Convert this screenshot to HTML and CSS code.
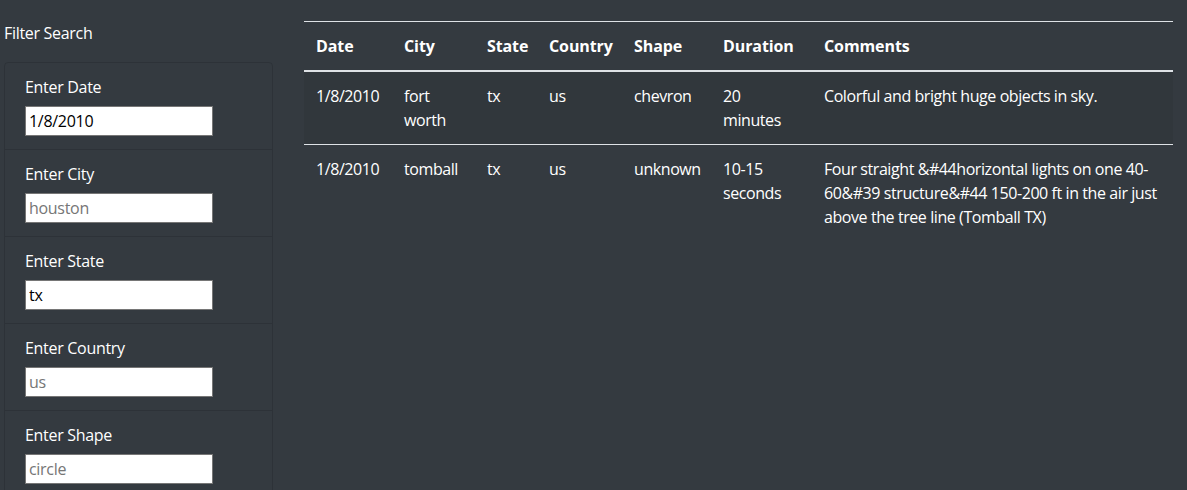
FILE: index.html
```html
<!DOCTYPE html>
<html lang="en">
<head>
<meta charset="utf-8">
<title>UFO Sightings</title>
<link rel="stylesheet" href="styles.css">
</head>
<body>
<div class="page">
  <aside class="sidebar">
    <div class="sidebar-title">Filter Search</div>
    <ul class="filters">
      <li class="filter">
        <label class="filter-label" for="date">Enter Date</label>
        <input class="filter-input" id="date" type="text" value="1/8/2010" placeholder="1/8/2010">
      </li>
      <li class="filter">
        <label class="filter-label" for="city">Enter City</label>
        <input class="filter-input" id="city" type="text" placeholder="houston">
      </li>
      <li class="filter">
        <label class="filter-label" for="state">Enter State</label>
        <input class="filter-input" id="state" type="text" value="tx" placeholder="tx">
      </li>
      <li class="filter">
        <label class="filter-label" for="country">Enter Country</label>
        <input class="filter-input" id="country" type="text" placeholder="us">
      </li>
      <li class="filter">
        <label class="filter-label" for="shape">Enter Shape</label>
        <input class="filter-input" id="shape" type="text" placeholder="circle">
      </li>
    </ul>
  </aside>
  <main class="results">
    <table class="ufo-table">
      <colgroup>
        <col class="c-date"><col class="c-city"><col class="c-state"><col class="c-country"><col class="c-shape"><col class="c-duration"><col class="c-comments">
      </colgroup>
      <thead>
        <tr>
          <th>Date</th><th>City</th><th>State</th><th>Country</th><th>Shape</th><th>Duration</th><th>Comments</th>
        </tr>
      </thead>
      <tbody>
        <tr class="striped">
          <td>1/8/2010</td><td>fort worth</td><td>tx</td><td>us</td><td>chevron</td><td>20 minutes</td><td>Colorful and bright huge objects in sky.</td>
        </tr>
        <tr>
          <td>1/8/2010</td><td>tomball</td><td>tx</td><td>us</td><td>unknown</td><td>10-15 seconds</td><td>Four straight &amp;#44horizontal lights on one 40-60&amp;#39 structure&amp;#44 150-200 ft in the air just above the tree line (Tomball TX)</td>
        </tr>
      </tbody>
    </table>
  </main>
</div>
</body>
</html>
```

FILE: styles.css
```css
* { box-sizing: border-box; }

html, body {
  margin: 0;
  padding: 0;
  background: #343a40;
  height: 100%;
}

body {
  font-family: "Segoe UI", "Open Sans", "Noto Sans", sans-serif;
  font-size: 16px;
  line-height: 24px;
  letter-spacing: -0.3px;
  color: #fff;
}

.page {
  display: flex;
  align-items: flex-start;
  gap: 31px;
  padding-right: 14px;
}

.sidebar {
  flex: 0 0 273px;
  padding: 21px 0 0 4px;
}

.sidebar-title {
  line-height: 24px;
  margin-bottom: 17px;
}

.filters {
  list-style: none;
  margin: 0;
  padding: 0;
  border: 1px solid rgba(0, 0, 0, 0.125);
  border-radius: 4px;
}

.filter {
  display: flex;
  flex-direction: column;
  align-items: flex-start;
  padding: 12px 20px 13px;
  border-top: 1px solid rgba(0, 0, 0, 0.125);
}

.filter:first-child { border-top: 0; }

.filter-label {
  line-height: 24px;
  margin-bottom: 7px;
}

.filter-input {
  width: 188px;
  height: 30px;
  padding: 1px 3px;
  border: 1px solid #767676;
  background: #fff;
  color: #000;
  font-family: inherit;
  font-size: 16px;
  letter-spacing: -0.3px;
  outline: none;
}

.filter-input::placeholder { color: #767676; }

.results {
  flex: 1 1 auto;
  padding-top: 21px;
}

.ufo-table {
  width: 869px;
  border-collapse: collapse;
  table-layout: fixed;
  color: #fff;
}

.c-date { width: 88px; }
.c-city { width: 83px; }
.c-state { width: 62px; }
.c-country { width: 85px; }
.c-shape { width: 89px; }
.c-duration { width: 101px; }
.c-comments { width: 361px; }

.ufo-table th,
.ufo-table td {
  padding: 12px;
  text-align: left;
  vertical-align: top;
  border-top: 1px solid #dee2e6;
  line-height: 24px;
}

.ufo-table td { letter-spacing: -0.42px; }

.ufo-table th {
  font-weight: 700;
  letter-spacing: -0.1px;
  border-bottom: 2px solid #dee2e6;
}

.ufo-table thead + tbody tr:first-child td { border-top: 0; }

.ufo-table .striped { background: rgba(0, 0, 0, 0.05); }
```
